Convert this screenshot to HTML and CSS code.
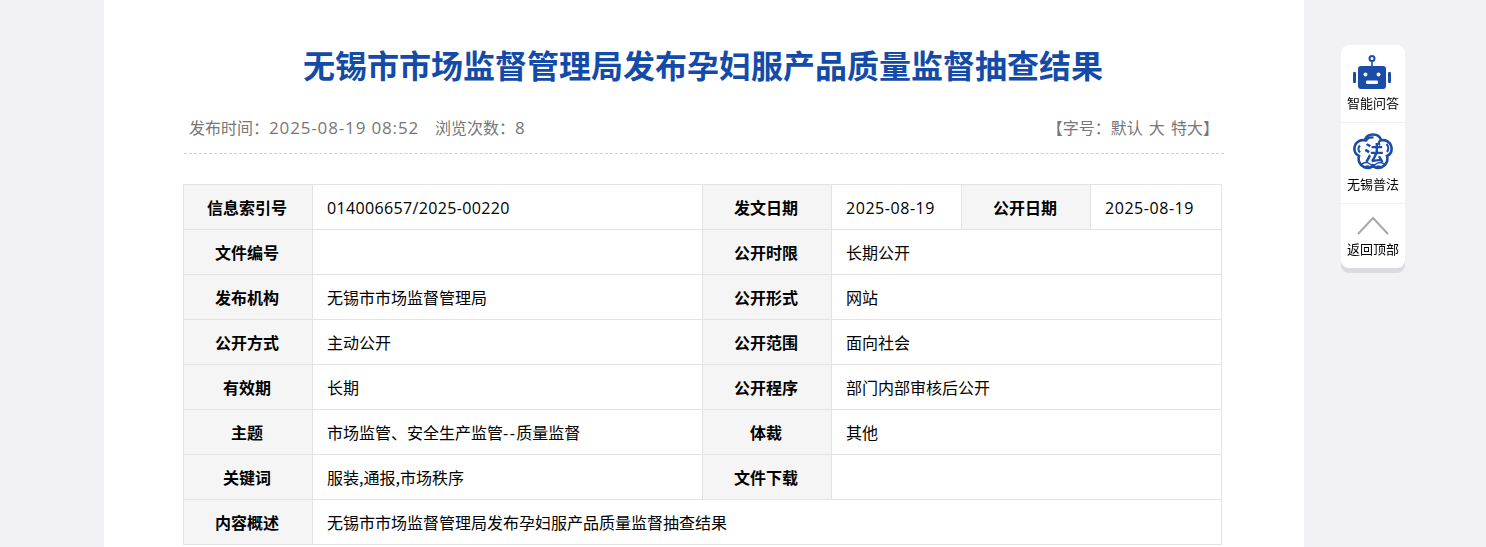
FILE: index.html
```html
<!DOCTYPE html>
<html lang="zh-CN">
<head>
<meta charset="utf-8">
<title>无锡市市场监督管理局发布孕妇服产品质量监督抽查结果</title>
<link rel="stylesheet" href="styles.css">
</head>
<body>
<main class="page">
  <h1 class="title">无锡市市场监督管理局发布孕妇服产品质量监督抽查结果</h1>
  <div class="meta">
    <div class="meta-left"><span>发布时间：<span class="num num-lg">2025-08-19 08:52</span></span><span>浏览次数：<span class="num num-lg">8</span></span></div>
    <div class="meta-right">【字号：默认 大 特大】</div>
  </div>
  <table class="info">
    <colgroup>
      <col class="c-a"><col class="c-b"><col class="c-c"><col class="c-d"><col class="c-e"><col class="c-f">
    </colgroup>
    <tr><th>信息索引号</th><td><span class="num num-tight">014006657/2025-00220</span></td><th>发文日期</th><td><span class="num">2025-08-19</span></td><th>公开日期</th><td><span class="num">2025-08-19</span></td></tr>
    <tr><th>文件编号</th><td></td><th>公开时限</th><td colspan="3">长期公开</td></tr>
    <tr><th>发布机构</th><td>无锡市市场监督管理局</td><th>公开形式</th><td colspan="3">网站</td></tr>
    <tr><th>公开方式</th><td>主动公开</td><th>公开范围</th><td colspan="3">面向社会</td></tr>
    <tr><th>有效期</th><td>长期</td><th>公开程序</th><td colspan="3">部门内部审核后公开</td></tr>
    <tr><th>主题</th><td>市场监管、安全生产监管<span class="num num-dash">--</span>质量监督</td><th>体裁</th><td colspan="3">其他</td></tr>
    <tr><th>关键词</th><td>服装,通报,市场秩序</td><th>文件下载</th><td colspan="3"></td></tr>
    <tr><th>内容概述</th><td colspan="5">无锡市市场监督管理局发布孕妇服产品质量监督抽查结果</td></tr>
  </table>
</main>
<aside class="side">
  <a class="side-item">
    <svg class="ico-robot" viewBox="0 0 40 36" width="40" height="36">
      <circle cx="19" cy="3.500" r="2.500" fill="none" stroke="#1a4ca8" stroke-width="2"/>
      <rect x="18.200" y="5.500" width="1.600" height="6" fill="#1a4ca8"/>
      <rect x="5" y="11" width="28" height="23" rx="3" fill="#1a4ca8"/>
      <rect x="0" y="17" width="3" height="11" rx="1" fill="#1a4ca8"/>
      <rect x="35" y="17" width="3" height="11" rx="1" fill="#1a4ca8"/>
      <circle cx="12.500" cy="19.500" r="2" fill="#fff"/>
      <circle cx="25.500" cy="19.500" r="2" fill="#fff"/>
      <rect x="13" y="25.500" width="12" height="3.500" rx="1.200" fill="#fff"/>
    </svg>
    <span>智能问答</span>
  </a>
  <a class="side-item side-law">
    <svg class="ico-law" viewBox="0 0 40 40" width="40" height="40">
      <path d="M20 1.500c4.200 0 7.300 2.300 8 5.800 4.700-1 9.300 1.700 10.300 6.200 1 4.300-1 7.800-4.300 9.500 1.300 4.500-.8 9.500-5.300 11.200-3.300 1.300-6.700.4-8.700-1.700-2 2.100-5.400 3-8.700 1.700-4.500-1.700-6.600-6.700-5.300-11.200-3.300-1.700-5.300-5.200-4.300-9.500 1-4.500 5.600-7.200 10.300-6.200.7-3.500 3.800-5.800 8-5.800z" fill="#fff" stroke="#1a4ca8" stroke-width="2.600"/>
      <path d="M13 8.500c1-3 4-4.500 7.500-3.800M27 7.500c-1.500 1.500-1.500 3.500 0 4.500M7 12.500c-2 2-2 5 0 7M33.500 11c2 2 2.300 5.500.5 8" fill="none" stroke="#1a4ca8" stroke-width="2.200"/>
      <path d="M8 31.500c3-2.500 6.500-2.500 9-.5 2 1.500 4 1.500 6 0 2.500-2 6-2 9 .5M11 34.500c2.500-2 5-1.500 7 0M22 34.500c2-1.500 4.500-2 7 0" fill="none" stroke="#1a4ca8" stroke-width="1.500"/>
      <text x="21" y="28" text-anchor="middle" class="law-char">法</text>
    </svg>
    <span>无锡普法</span>
  </a>
  <a class="side-item side-top">
    <svg class="ico-up" viewBox="0 0 32 19" width="32" height="19">
      <path d="M1 18 16 2 31 18" fill="none" stroke="#a8a8a8" stroke-width="2"/>
    </svg>
    <span>返回顶部</span>
  </a>
</aside>
</body>
</html>
```
FILE: styles.css
```css
* { box-sizing: border-box; }
html, body { margin: 0; height: 100%; overflow: hidden; }
body {
  background: #f1f1f6;
  font-family: "Noto Sans CJK SC", "Liberation Sans", sans-serif;
  color: #000;
}
.page {
  width: 1200px;
  height: 100%;
  margin-left: 104px;
  background: #fff;
  padding: 0 81px 0 79px;
}
.title {
  margin: 0;
  padding-top: 40px;
  height: 109px;
  font-size: 32px;
  line-height: 48px;
  font-weight: 700;
  color: #144ba8;
  text-align: center;
  white-space: nowrap;
}
.meta {
  display: flex;
  justify-content: space-between;
  width: 1040px;
  height: 45px;
  padding: 0 5px;
  border-bottom: 1px dashed #cfcfcf;
  font-size: 16px;
  line-height: 37px;
  color: #777;
  margin-left: 1px;
}
.meta-left { display: flex; gap: 16px; }
.meta-right { word-spacing: 2.600px; }
.num {
  font-family: "Open Sans", "Noto Sans CJK SC", sans-serif;
  letter-spacing: 0.550px;
}
.num-lg { font-size: 17px; letter-spacing: 0.850px; }
.num-tight { letter-spacing: 0.350px; }
.num-dash { letter-spacing: 1.500px; }
.info {
  margin-top: 30px;
  width: 1038px;
  table-layout: fixed;
  border-collapse: collapse;
  font-size: 16px;
}
.c-a { width: 129px; }
.c-b { width: 390px; }
.c-c { width: 129px; }
.c-d { width: 130px; }
.c-e { width: 129px; }
.c-f { width: 131px; }
.info tr { height: 45px; }
.info th, .info td {
  border: 1px solid #e3e3e3;
  padding: 0 14px;
  white-space: nowrap;
}
.info th {
  background: #f5f5f5;
  font-weight: 700;
  text-align: center;
  padding: 0 16px 0 14px;
}
.info td { text-align: left; }
.side {
  position: fixed;
  left: 1341px;
  top: 45px;
  width: 64px;
  height: 223px;
  display: flex;
  flex-direction: column;
  background: #fff;
  border-radius: 8px;
  box-shadow: 0 5px 0 #dcdce0;
}
.side-item {
  display: flex;
  flex-direction: column;
  align-items: center;
  height: 78px;
  padding-top: 10px;
  border-bottom: 1px solid #f2f2f2;
  font-size: 13px;
  line-height: 18px;
  color: #000;
}
.side-item svg { display: block; flex: none; }
.side-item span { white-space: nowrap; }
.side-item .ico-robot { margin-bottom: 3px; }
.side-law { height: 81px; }
.side-law svg { margin-bottom: 2px; }
.side-top { height: 64px; border-bottom: 0; padding-top: 12px; }
.side-top span { margin-top: 5px; }
.law-char {
  font-family: "Noto Sans CJK SC", sans-serif;
  font-size: 20px;
  font-weight: 700;
  fill: #1a4ca8;
}
```
